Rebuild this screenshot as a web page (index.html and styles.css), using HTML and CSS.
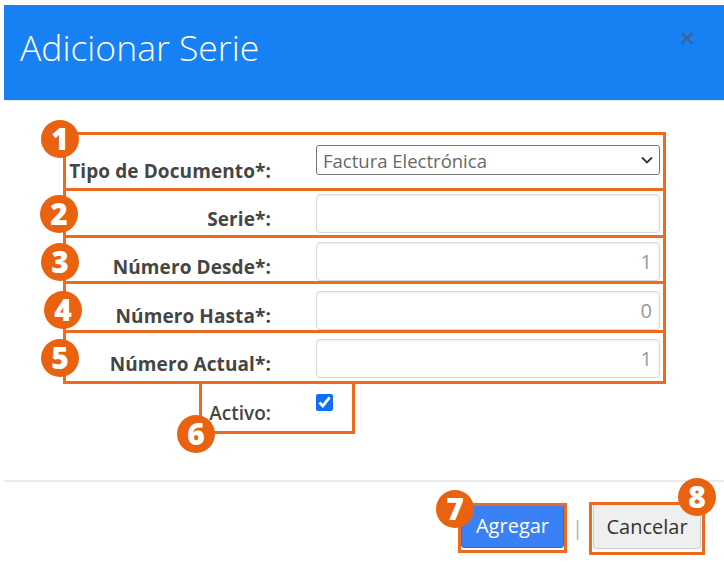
FILE: index.html
```html
<!DOCTYPE html>
<html lang="es">
<head>
    <meta charset="UTF-8">
    <meta name="viewport" content="width=device-width, initial-scale=1.0">
    <title>Adicionar Serie</title>
    <link rel="stylesheet" href="styles.css">
</head>
<body>

<!-- Modal -->
<div class="modal">
    <div class="modal-header">
        <h2 class="modal-title">Adicionar Serie</h2>
        <button class="close" type="button">&times;</button>
    </div>

    <div class="modal-body">
        <form class="serie-form">
            <div class="form-row first">
                <label for="tipoDocumento">Tipo de Documento*:</label>
                <div class="select-wrap">
                    <select id="tipoDocumento">
                        <option>Factura Electrónica</option>
                    </select>
                    <svg class="chevron" width="12" height="8" viewBox="0 0 12 8">
                        <path d="M1 1.5 L6 6.5 L11 1.5" fill="none" stroke="#333" stroke-width="1.8"/>
                    </svg>
                </div>
            </div>
            <div class="form-row">
                <label for="serie">Serie*:</label>
                <input type="text" id="serie">
            </div>
            <div class="form-row">
                <label for="numDesde">Número Desde*:</label>
                <input type="text" id="numDesde" value="1">
            </div>
            <div class="form-row">
                <label for="numHasta">Número Hasta*:</label>
                <input type="text" id="numHasta" value="0">
            </div>
            <div class="form-row">
                <label for="numActual">Número Actual*:</label>
                <input type="text" id="numActual" value="1">
            </div>
            <div class="form-row check-row">
                <label for="activo" class="light">Activo:</label>
                <input type="checkbox" id="activo" checked>
            </div>
        </form>
    </div>

    <div class="modal-footer">
        <button class="btn btn-primary" type="button">Agregar</button>
        <span class="divider">|</span>
        <button class="btn btn-default" type="button">Cancelar</button>
    </div>
</div>

<!-- Annotation marks -->
<div class="marks">
    <div class="mark-box box1"></div>
    <div class="mark-box box2"></div>
    <div class="mark-box box3"></div>
    <div class="mark-box box4"></div>
    <div class="mark-box box5"></div>
    <div class="mark-box box6"></div>
    <div class="mark-box box7"></div>
    <div class="mark-box box8"></div>

    <div class="mark-num n1">1</div>
    <div class="mark-num n2">2</div>
    <div class="mark-num n3">3</div>
    <div class="mark-num n4">4</div>
    <div class="mark-num n5">5</div>
    <div class="mark-num n6">6</div>
    <div class="mark-num n7">7</div>
    <div class="mark-num n8">8</div>
</div>

</body>
</html>
```

FILE: styles.css
```css
body {
    margin: 0;
    background: #fff;
    font-family: "Open Sans", Arial, sans-serif;
    color: #444;
}

.modal {
    margin: 5px 0 0 4px;
    background: #fff;
}

.modal-header {
    height: 95px;
    background: #1781f4;
    border-bottom: 1px solid #e6eef8;
    display: flex;
    align-items: flex-start;
    justify-content: space-between;
    padding: 0 29px 0 16px;
}

.modal-title {
    margin: 20px 0 0 0;
    font-size: 35.5px;
    font-weight: 300;
    line-height: 44px;
    color: #fff;
}

.close {
    margin-top: 18px;
    padding: 0;
    background: none;
    border: none;
    font-family: Arial, sans-serif;
    font-size: 26px;
    font-weight: bold;
    color: #3569a5;
    cursor: pointer;
}

.modal-body {
    padding: 44px 0 0 0;
    height: 381px;
    box-sizing: border-box;
    border-bottom: 2px solid #ebebeb;
}

.form-row {
    display: grid;
    grid-template-columns: 267px 344px;
    column-gap: 45px;
    align-items: start;
    height: 48.4px;
}

.form-row.first {
    height: 49px;
}

.form-row label {
    text-align: right;
    font-size: 19px;
    font-weight: 700;
    line-height: 22px;
    letter-spacing: 0.1px;
    padding-top: 14px;
    color: #454545;
}

.form-row.first label {
    padding-top: 15px;
}

.form-row label.light {
    font-weight: 600;
    font-size: 19px;
    letter-spacing: 0;
}

.select-wrap {
    position: relative;
    height: 30px;
}

select {
    box-sizing: border-box;
    width: 100%;
    height: 30px;
    margin: 0;
    padding: 0 6px;
    font-family: "Open Sans", Arial, sans-serif;
    font-size: 18.5px;
    color: #686868;
    background: #fff;
    border: 1px solid #767676;
    border-radius: 3px;
    appearance: none;
}

.chevron {
    position: absolute;
    right: 7px;
    top: 11px;
    pointer-events: none;
}

input[type="text"] {
    box-sizing: border-box;
    height: 39px;
    margin: 0;
    padding: 0 7px;
    font-family: "Open Sans", Arial, sans-serif;
    font-size: 20px;
    text-align: right;
    color: #9a9a9a;
    border: 1px solid #d8d8d8;
    border-radius: 4px;
    box-shadow: inset 0 1px 2px rgba(0, 0, 0, 0.08);
}

input[type="checkbox"] {
    width: 17px;
    height: 17px;
    margin: 6px 0 0 0;
    accent-color: #0d6efd;
}

.modal-footer {
    display: flex;
    justify-content: flex-end;
    align-items: flex-start;
    padding: 21px 23px 0 0;
}

.btn {
    height: 45px;
    padding: 0;
    font-family: "Open Sans", Arial, sans-serif;
    font-size: 20px;
    border-radius: 3px;
    cursor: pointer;
}

.btn-primary {
    width: 103px;
    background: #3a81f5;
    color: #fff;
    border: 1px solid #2e6fd9;
}

.btn-default {
    width: 108px;
    margin-top: 1px;
    background: #efefef;
    color: #333;
    border: 1px solid #cfcfcf;
}

.divider {
    width: 29px;
    box-sizing: border-box;
    padding-left: 8px;
    margin-top: 11px;
    font-size: 20px;
    line-height: 27px;
    color: #b0b0b0;
}

/* annotation overlay */
.marks {
    position: absolute;
    left: 0;
    top: 0;
}

.mark-box {
    position: absolute;
    box-sizing: border-box;
    border: 3px solid #ee6a1f;
}

.box1 { left: 63px; top: 132px; width: 603px; height: 59px; }
.box2 { left: 63px; top: 188px; width: 603px; height: 50px; }
.box3 { left: 63px; top: 235px; width: 603px; height: 49px; }
.box4 { left: 63px; top: 281px; width: 603px; height: 52px; }
.box5 { left: 63px; top: 330px; width: 603px; height: 54px; }
.box6 { left: 199px; top: 381px; width: 156px; height: 53px; }
.box7 { left: 458px; top: 503px; width: 109px; height: 50px; }
.box8 { left: 589px; top: 502px; width: 116px; height: 53px; }

.mark-num {
    position: absolute;
    width: 38px;
    height: 38px;
    margin: -19px 0 0 -19px;
    border-radius: 50%;
    background: #e8620f;
    color: #fff;
    font-size: 30px;
    font-weight: 800;
    line-height: 38px;
    text-align: center;
}

.n1 { left: 60px; top: 139px; }
.n2 { left: 59px; top: 214px; }
.n3 { left: 60px; top: 262px; }
.n4 { left: 63px; top: 310px; }
.n5 { left: 60px; top: 358px; }
.n6 { left: 196px; top: 434px; }
.n7 { left: 455px; top: 509px; }
.n8 { left: 697px; top: 497px; }
```
